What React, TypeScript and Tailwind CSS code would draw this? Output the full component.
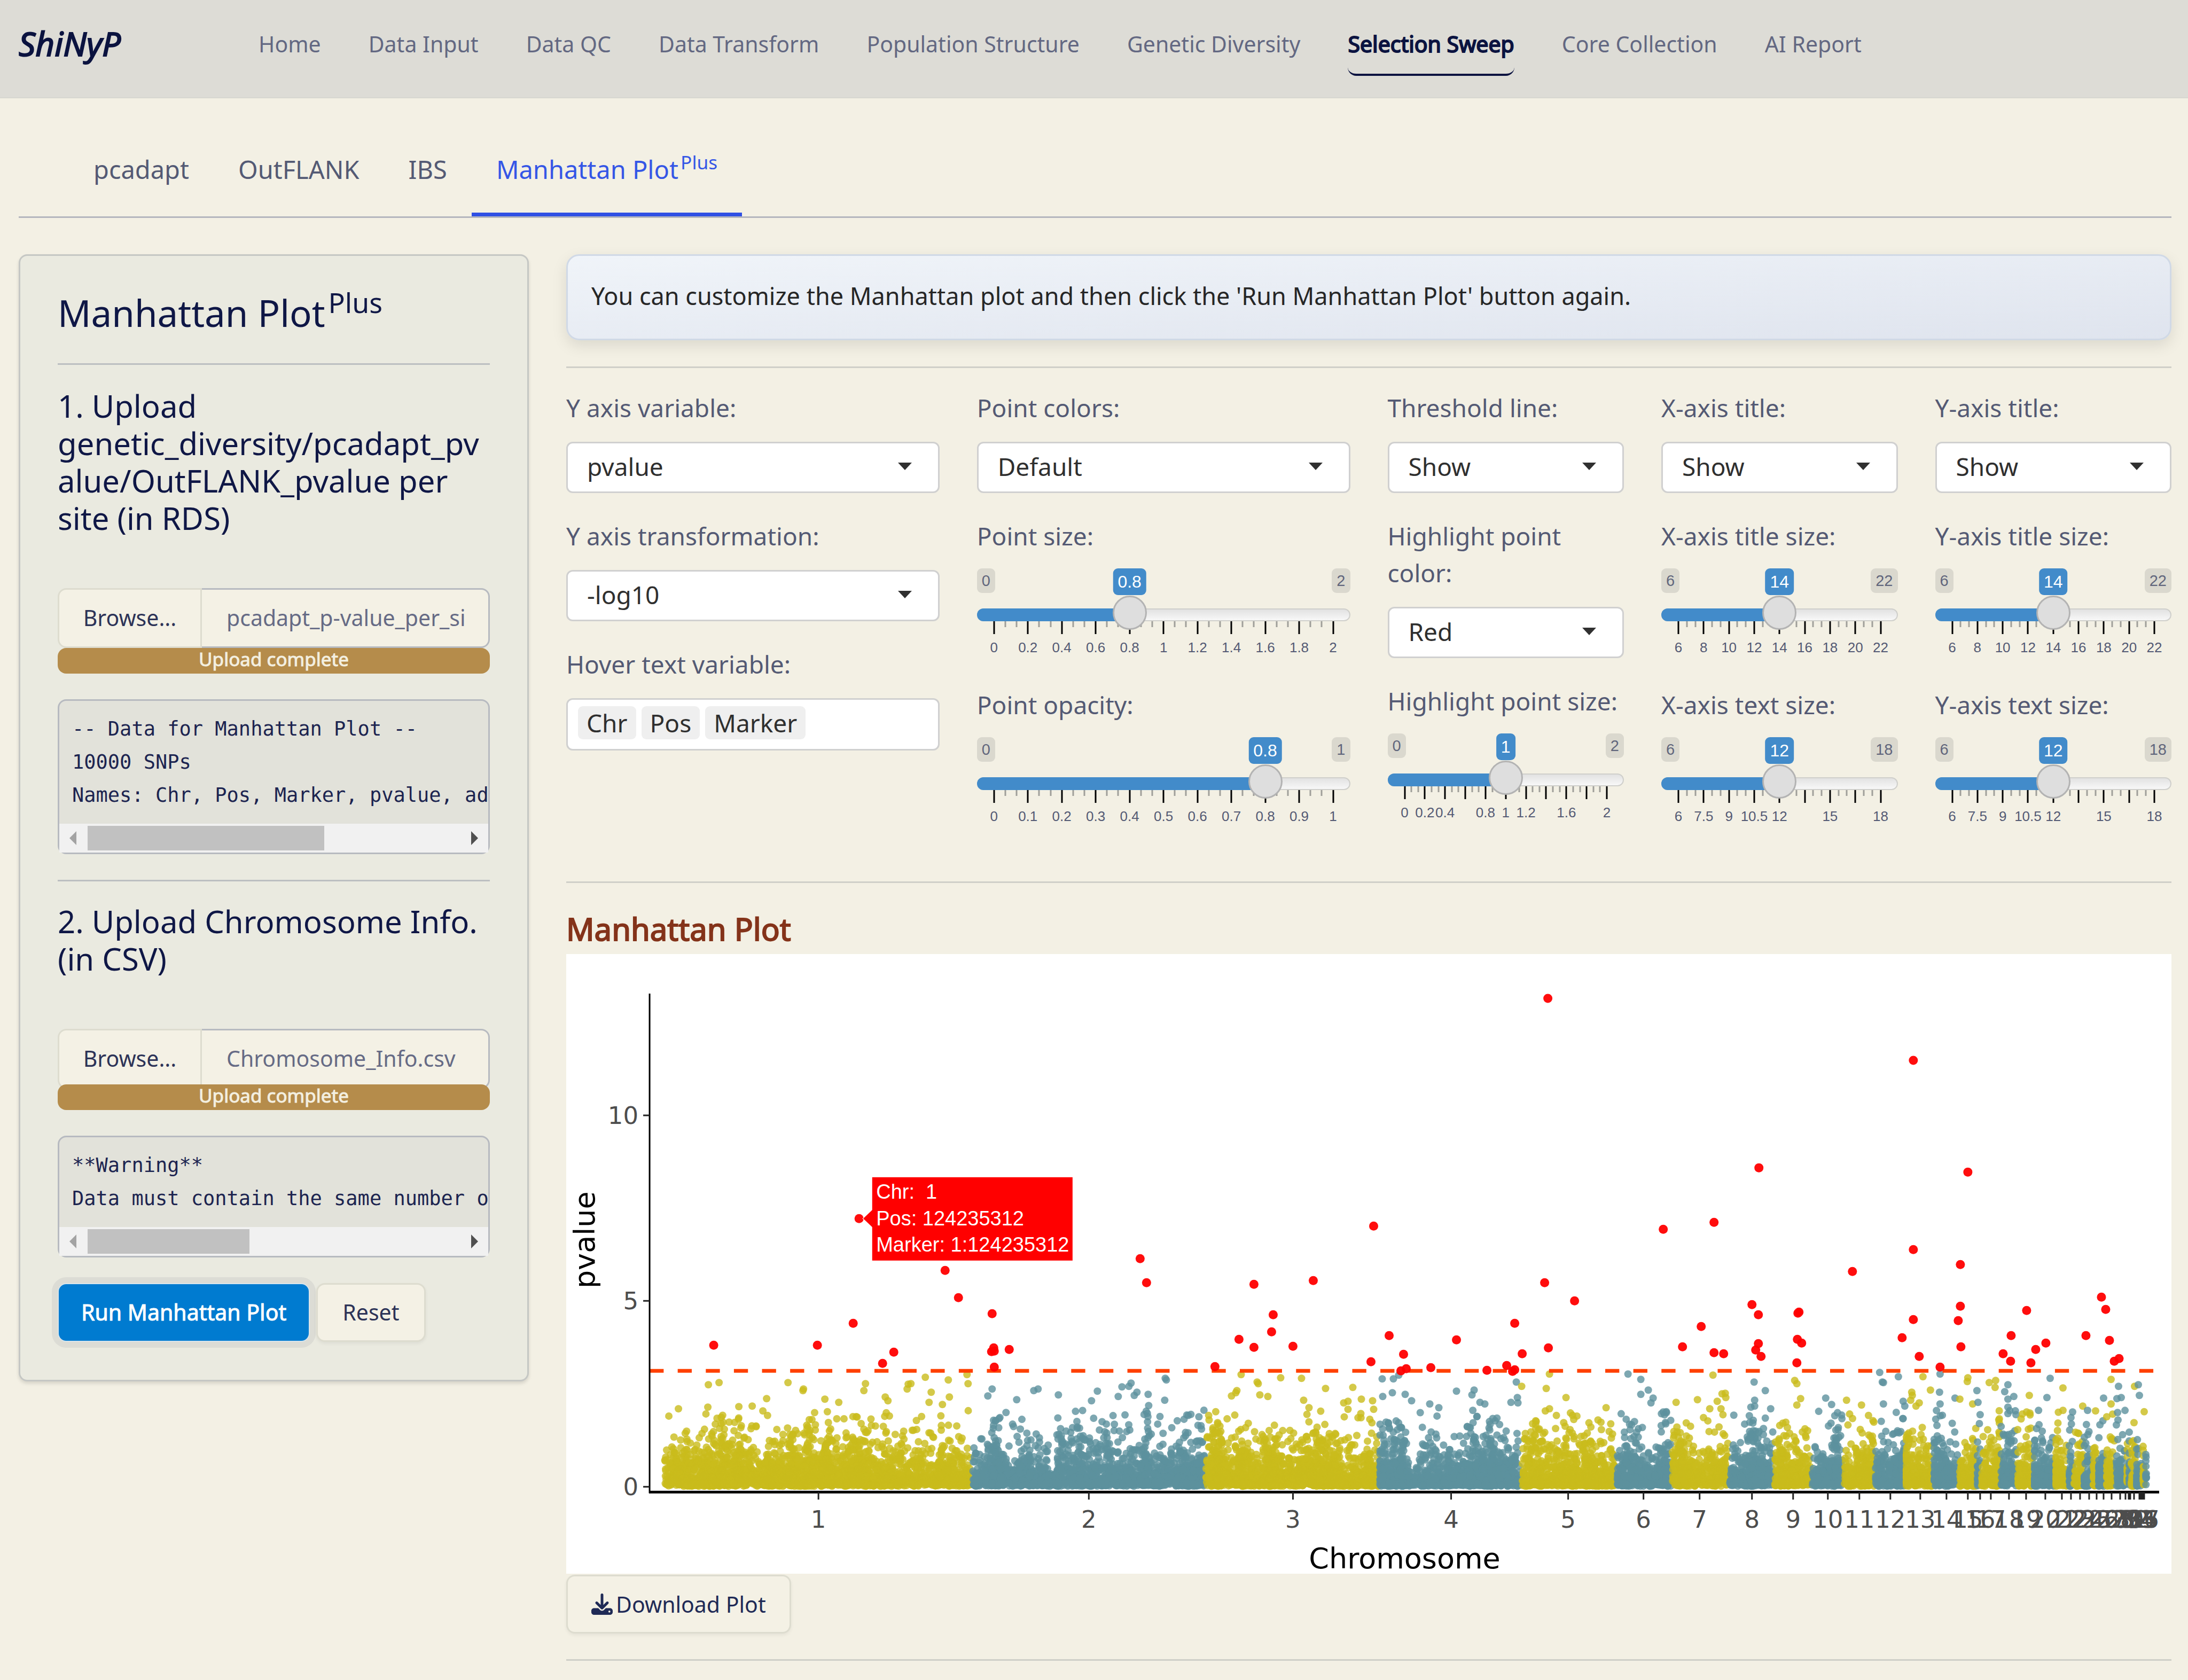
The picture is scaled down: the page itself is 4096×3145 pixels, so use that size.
import { useState } from "react";
import type { ReactNode } from "react";
import { FaDownload } from "react-icons/fa6";

const NAV_ITEMS = [
  "Home",
  "Data Input",
  "Data QC",
  "Data Transform",
  "Population Structure",
  "Genetic Diversity",
  "Selection Sweep",
  "Core Collection",
  "AI Report",
];

function Header() {
  return (
    <header className="flex min-h-[184px] items-start border-b-2 border-[#d7d7d0] bg-[#dddcd6] px-[35px]">
      <a
        href="#home"
        className="w-[200px] shrink-0 pt-9 text-[62px] leading-[90px] text-[#0b1340] italic [-webkit-text-stroke:2px_currentColor]"
      >
        ShiNyP
      </a>
      <nav className="ml-[249px] flex gap-[89px] pt-[51px]">
        {NAV_ITEMS.map((item) => (
          <a
            key={item}
            href={"#" + item.toLowerCase().replace(" ", "-")}
            className={
              item === "Selection Sweep"
                ? "rounded-b-[16px] border-b-4 border-[#0b1340] pb-[25px] text-[41px] leading-[62px] whitespace-nowrap text-[#0b1340] [-webkit-text-stroke:2px_currentColor]"
                : "border-b-4 border-transparent pb-[25px] text-[41px] leading-[62px] whitespace-nowrap text-[#636882]"
            }
          >
            {item}
          </a>
        ))}
      </nav>
    </header>
  );
}

function Tab({ active, children }: { active?: boolean; children: ReactNode }) {
  return (
    <button
      type="button"
      role="tab"
      aria-selected={active ? true : false}
      className={
        active
          ? "border-b-[7px] border-[#2f50e4] px-[46px] py-[46px] text-[47px] leading-[70px] whitespace-nowrap text-[#3556e6]"
          : "border-b-[7px] border-transparent px-[46px] py-[46px] text-[47px] leading-[70px] whitespace-nowrap text-[#545a74]"
      }
    >
      {children}
    </button>
  );
}

function FileUpload({ id, name, tight }: { id: string; name: string; tight?: boolean }) {
  return (
    <div className="mt-24">
      <div className="flex h-28">
        <button
          type="button"
          className="w-[270px] shrink-0 rounded-l-[16px] border-[3px] border-[#dddccf] bg-[#f4f1e5] text-[41px] text-[#2c3357]"
        >
          Browse...
        </button>
        <input
          id={id}
          aria-label="Selected file"
          readOnly
          value={name}
          className="min-w-0 flex-1 rounded-r-[16px] border-[3px] border-l-0 border-[#b7bac0] bg-[#f4f1e5] pr-9 pl-[46px] text-[41px] text-[#666b85]"
        />
      </div>
      <div
        className={
          tight
            ? "relative -mt-2 h-12 rounded-[16px] bg-[#b58c4b] text-center text-[35px] leading-[42px] text-[#f3efe0] [-webkit-text-stroke:1px_currentColor]"
            : "h-12 rounded-[16px] bg-[#b58c4b] text-center text-[35px] leading-[42px] text-[#f3efe0] [-webkit-text-stroke:1px_currentColor]"
        }
      >
        Upload complete
      </div>
    </div>
  );
}

function OutputBox({ text, thumb }: { text: string; thumb: string }) {
  return (
    <div className="mt-12 rounded-[16px] border-[3px] border-[#b7bac0] bg-[#e2e2da]">
      <pre className="overflow-hidden px-6 py-[22px] font-['DejaVu_Sans_Mono',monospace] text-[37px] leading-[62px] text-[#1c2450]">
        {text}
      </pre>
      <div className="flex h-[54px] items-center bg-[#f1f1f1] px-[19px]">
        <svg viewBox="0 0 13 26" className="h-[26px] w-[13px]" aria-hidden="true">
          <path d="M13 0 0 13l13 13z" fill="#a3a3a3" />
        </svg>
        <div className="mx-[21px] h-[46px] flex-1">
          <div className="h-full bg-[#c1c1c1]" style={{ width: thumb }} />
        </div>
        <svg viewBox="0 0 13 26" className="h-[26px] w-[13px]" aria-hidden="true">
          <path d="m0 0 13 13L0 26z" fill="#505050" />
        </svg>
      </div>
    </div>
  );
}

function Sidebar() {
  return (
    <aside className="self-start rounded-[16px] border-[3px] border-[#c5c7c4] bg-[#eaeae0] px-[70px] pt-16 pb-[71px] shadow-[0_4px_6px_rgba(0,0,0,0.12)]">
      <h2 className="text-[69px] leading-[84px] text-[#0f1746]">
        Manhattan Plot <sup className="-ml-3">Plus</sup>
      </h2>
      <hr className="mt-[53px] border-t-[3px] border-[#bcbfc1]" />
      <h3 className="mt-[42px] text-[58px] leading-[70px] wrap-anywhere text-[#0f1746]">
        1. Upload genetic_diversity/pcadapt_pvalue/OutFLANK_pvalue per site (in RDS)
      </h3>
      <FileUpload id="sites-file" name="pcadapt_p-value_per_si" />
      <OutputBox
        text={"-- Data for Manhattan Plot --\n10000 SNPs\nNames: Chr, Pos, Marker, pvalue, adj.pvalue"}
        thumb="63.5%"
      />
      <hr className="mt-12 border-t-[3px] border-[#bcbfc1]" />
      <h3 className="mt-10 text-[58px] leading-[70px] text-[#0f1746]">2. Upload Chromosome Info. (in CSV)</h3>
      <FileUpload id="chromosome-file" name="Chromosome_Info.csv" tight />
      <OutputBox
        text={"**Warning**\nData must contain the same number of chromosomes"}
        thumb="43.5%"
      />
      <div className="mt-12 flex gap-3">
        <button
          type="button"
          className="h-[110px] rounded-[16px] border-2 border-[#d9e4ea] bg-[#007bd0] px-[42px] text-[41px] whitespace-nowrap text-white shadow-[0_0_0_11px_#dcdcd5] [-webkit-text-stroke:1px_currentColor]"
        >
          Run Manhattan Plot
        </button>
        <button
          type="button"
          className="h-[110px] rounded-[16px] border-[3px] border-[#dddccf] bg-[#f4f1e5] px-[46px] text-[41px] text-[#2c3357] shadow-[0_3px_6px_rgba(0,0,0,0.06)]"
        >
          Reset
        </button>
      </div>
    </aside>
  );
}

function SelectField({ id, label, options }: { id: string; label: string; options: string[] }) {
  return (
    <div className="mb-[46px]">
      <label htmlFor={id} className="block text-[46px] leading-[69px] text-[#545a74]">
        {label}
      </label>
      <div className="relative mt-[29px]">
        <select
          id={id}
          className="h-24 w-full appearance-none rounded-[12px] border-[3px] border-[#d0d0d0] bg-white px-9 pb-1 text-[46px] text-[#2f2f2f]"
        >
          {options.map((option) => (
            <option key={option}>{option}</option>
          ))}
        </select>
        <svg
          viewBox="0 0 26 14"
          className="pointer-events-none absolute top-[39px] right-[52px] h-[14px] w-[26px]"
          aria-hidden="true"
        >
          <path d="M0 0h26L13 14z" fill="#303030" />
        </svg>
      </div>
    </div>
  );
}

function TagField({ label, tags }: { label: string; tags: string[] }) {
  return (
    <div>
      <label htmlFor="hover-text" className="block text-[46px] leading-[69px] text-[#545a74]">
        {label}
      </label>
      <div className="mt-[29px] flex h-[98px] items-start gap-[10px] rounded-[12px] border-[3px] border-[#d0d0d0] bg-white px-[19px] pt-3">
        {tags.map((tag) => (
          <span key={tag} className="rounded-[9px] bg-[#efefef] px-4 text-[46px] leading-[62px] text-[#2f2f2f]">
            {tag}
          </span>
        ))}
        <input id="hover-text" className="h-[62px] min-w-0 flex-1 outline-none" />
      </div>
    </div>
  );
}

type SliderProps = {
  id: string;
  label: string;
  min: number;
  max: number;
  step: number;
  initial: number;
  ticks: string[];
};

function SliderField({ id, label, min, max, step, initial, ticks }: SliderProps) {
  const [value, setValue] = useState(initial);
  const share = ((value - min) / (max - min)) * 100;
  const intervals = ticks.length - 1;
  const marks = Array.from({ length: intervals * 3 + 1 }, (_, i) => i);
  return (
    <div className="mb-[46px]">
      <label htmlFor={id} className="block text-[46px] leading-[69px] text-[#545a74]">
        {label}
      </label>
      <div className="relative mt-[26px] h-[175px] font-['Liberation_Sans',sans-serif]">
        <div className="flex h-[75px] items-start justify-between">
          <span className="rounded-[9px] bg-[#dad8ce] px-[9px] text-[29px] leading-[46px] text-[#61667c]">{min}</span>
          <span className="rounded-[9px] bg-[#dad8ce] px-[9px] text-[29px] leading-[46px] text-[#61667c]">{max}</span>
        </div>
        <div className="flex h-6 overflow-hidden rounded-[12px] border-2 border-[#cfcfcb] bg-linear-to-b from-[#e2e2e2] to-[#f8f8f8]" />
        <div className="absolute top-[75px] right-8 left-8 h-0">
          <div className="-ml-8 h-6 rounded-l-[12px] bg-[#428bca]" style={{ width: "calc(" + share + "% + 32px)" }} />
          {marks.map((i) => (
            <span
              key={i}
              className={
                i % 3 === 0
                  ? "absolute top-6 h-6 w-[3px] -translate-x-1/2 bg-black"
                  : "absolute top-6 h-[11px] w-[3px] -translate-x-1/2 bg-[#a09f9a]"
              }
              style={{ left: (i / (intervals * 3)) * 100 + "%" }}
            />
          ))}
          {ticks.map((tick, i) => (
            <span
              key={i}
              className="absolute top-[57px] -translate-x-1/2 text-[26px] leading-[32px] text-[#545a74]"
              style={{ left: (i / intervals) * 100 + "%" }}
            >
              {tick}
            </span>
          ))}
          <span
            className="absolute top-[-24px] size-16 -translate-x-1/2 rounded-full border-[3px] border-[#b3b3b3] bg-[#dedede]"
            style={{ left: share + "%" }}
          />
          <span
            className="absolute top-[-75px] -translate-x-1/2 rounded-[9px] bg-[#428bca] px-[9px] text-[32px] leading-[50px] text-white"
            style={{ left: share + "%" }}
          >
            {value}
          </span>
        </div>
        <input
          id={id}
          type="range"
          min={min}
          max={max}
          step={step}
          value={value}
          onChange={(event) => setValue(Number(event.target.value))}
          className="absolute top-[50px] left-0 h-16 w-full cursor-pointer opacity-0"
        />
      </div>
    </div>
  );
}

const SIZE_TICKS = ["6", "8", "10", "12", "14", "16", "18", "20", "22"];
const TEXT_TICKS = ["6", "7.5", "9", "10.5", "12", "", "15", "", "18"];

function Controls() {
  return (
    <section className="mt-10 grid grid-cols-12 gap-x-[70px]">
      <div className="col-span-3">
        <SelectField id="y-variable" label="Y axis variable:" options={["pvalue"]} />
        <SelectField id="y-transform" label="Y axis transformation:" options={["-log10"]} />
        <TagField label="Hover text variable:" tags={["Chr", "Pos", "Marker"]} />
      </div>
      <div className="col-span-3">
        <SelectField id="point-colors" label="Point colors:" options={["Default"]} />
        <SliderField
          id="point-size"
          label="Point size:"
          min={0}
          max={2}
          step={0.1}
          initial={0.8}
          ticks={["0", "0.2", "0.4", "0.6", "0.8", "1", "1.2", "1.4", "1.6", "1.8", "2"]}
        />
        <SliderField
          id="point-opacity"
          label="Point opacity:"
          min={0}
          max={1}
          step={0.1}
          initial={0.8}
          ticks={["0", "0.1", "0.2", "0.3", "0.4", "0.5", "0.6", "0.7", "0.8", "0.9", "1"]}
        />
      </div>
      <div className="col-span-2">
        <SelectField id="threshold" label="Threshold line:" options={["Show", "Hide"]} />
        <SelectField id="highlight-color" label="Highlight point color:" options={["Red"]} />
        <SliderField
          id="highlight-size"
          label="Highlight point size:"
          min={0}
          max={2}
          step={0.1}
          initial={1}
          ticks={["0", "0.2", "0.4", "", "0.8", "1", "1.2", "", "1.6", "", "2"]}
        />
      </div>
      <div className="col-span-2">
        <SelectField id="x-title" label="X-axis title:" options={["Show", "Hide"]} />
        <SliderField id="x-title-size" label="X-axis title size:" min={6} max={22} step={1} initial={14} ticks={SIZE_TICKS} />
        <SliderField id="x-text-size" label="X-axis text size:" min={6} max={18} step={1} initial={12} ticks={TEXT_TICKS} />
      </div>
      <div className="col-span-2">
        <SelectField id="y-title" label="Y-axis title:" options={["Show", "Hide"]} />
        <SliderField id="y-title-size" label="Y-axis title size:" min={6} max={22} step={1} initial={14} ticks={SIZE_TICKS} />
        <SliderField id="y-text-size" label="Y-axis text size:" min={6} max={18} step={1} initial={12} ticks={TEXT_TICKS} />
      </div>
    </section>
  );
}

type Point = [number, number];

// Right edge of each chromosome's band on the x axis; the first band starts at BAND_START.
const BAND_START = 181;
const BAND_ENDS = [
  757, 1194, 1520, 1786, 1963, 2067, 2174, 2259, 2329, 2389, 2447, 2505, 2557, 2604, 2638, 2646, 2682, 2713, 2745, 2785,
  2810, 2819, 2838, 2855, 2865, 2880, 2898, 2918, 2922, 2926, 2936, 2948, 2953, 2956,
];

const TICK_X = [
  472, 978, 1360, 1656, 1875, 2016, 2121, 2219, 2296, 2361, 2420, 2478, 2534, 2583, 2623, 2646, 2666, 2700, 2732, 2768,
  2799, 2816, 2833, 2850, 2864, 2877, 2892, 2908, 2918, 2924, 2927, 2934, 2944, 2947, 2950, 2952, 2953,
];

const SIGNIFICANT: Point[] = [
  [276, 732], [470, 732], [537, 691], [548, 495], [592, 766], [613, 745], [709, 592], [734, 643], [797, 673], [800, 737],
  [796, 744], [801, 743], [801, 773], [829, 740], [1074, 570], [1086, 615], [1214, 772], [1259, 721], [1287, 618],
  [1287, 736], [1320, 707], [1323, 675], [1360, 734], [1398, 611], [1506, 763], [1511, 509], [1540, 714], [1567, 749],
  [1562, 780], [1572, 776], [1618, 774], [1666, 722], [1723, 779], [1760, 770], [1771, 781], [1775, 778], [1775, 691],
  [1789, 748], [1831, 615], [1837, 83], [1838, 737], [1887, 649], [2053, 515], [2089, 735], [2124, 697], [2148, 502],
  [2148, 746], [2166, 748], [2219, 656], [2231, 675], [2232, 400], [2231, 729], [2226, 741], [2236, 753], [2305, 672],
  [2307, 670], [2304, 721], [2312, 728], [2303, 765], [2407, 594], [2500, 718], [2521, 199], [2521, 553], [2521, 684],
  [2532, 753], [2571, 773], [2623, 408], [2609, 581], [2609, 659], [2605, 686], [2610, 735], [2689, 748], [2704, 714],
  [2703, 762], [2733, 667], [2741, 765], [2750, 740], [2769, 728], [2844, 714], [2873, 642], [2881, 665], [2888, 723],
  [2897, 762], [2906, 757],
];

const UPPER_POINTS: Point[] = [
  [266, 806], [286, 802], [415, 802], [444, 814], [443, 817], [375, 832], [484, 833], [510, 839], [210, 851], [265, 848], [323, 847],
  [348, 846], [560, 804], [557, 817], [640, 805], [645, 804], [638, 814], [672, 792], [683, 820], [715, 797], [717, 829], [750, 787],
  [752, 804], [597, 829], [602, 836], [679, 839], [704, 843], [797, 814], [789, 827], [823, 858], [843, 834], [875, 817], [883, 814],
  [921, 825], [994, 818], [983, 836], [1040, 810], [1057, 803], [1053, 809], [1068, 820], [1063, 826], [1089, 824], [1121, 794], [1123, 797],
  [1120, 835], [1033, 828], [1090, 845], [1184, 866], [1263, 787], [1293, 801], [1295, 804], [1337, 793], [1376, 794], [1245, 827],
  [1255, 817], [1253, 821], [1298, 825], [1313, 828], [1421, 813], [1380, 835], [1390, 849], [1472, 811], [1455, 840], [1463, 852],
  [1463, 837], [1488, 833], [1509, 836], [1511, 852], [1527, 795], [1548, 795], [1558, 788], [1546, 821], [1570, 824], [1582, 836], [1528, 828],
  [1666, 818], [1699, 816], [1695, 825], [1616, 842], [1633, 849], [1710, 839], [1719, 842], [1778, 801], [1780, 830], [1768, 839], [1781, 840], [1788, 809],
  [1840, 786], [1834, 813], [1871, 830], [1946, 849], [1840, 851], [1987, 786], [2011, 796], [2025, 816], [2011, 824],
  [2034, 831], [2030, 840], [2053, 857], [2077, 839], [2117, 834], [2146, 788], [2169, 822], [2163, 823], [2170, 830], [2154, 837], [2140, 851],
  [2161, 851], [2223, 801], [2244, 817], [2224, 835], [2217, 848], [2224, 846], [2254, 851], [2185, 863], [2299, 798], [2303, 804], [2310, 832],
  [2303, 844], [2357, 831], [2368, 843], [2374, 864], [2396, 835], [2424, 844], [2458, 783], [2463, 801], [2465, 802],
  [2493, 791], [2465, 842], [2502, 837], [2505, 846], [2539, 791], [2518, 820], [2519, 826], [2516, 835], [2532, 840], [2526, 846], [2553, 816],
  [2571, 786], [2570, 820], [2571, 842], [2599, 831], [2623, 793], [2622, 800], [2608, 833], [2640, 817], [2632, 842],
  [2642, 839], [2646, 862], [2663, 802], [2675, 798], [2674, 811], [2698, 806], [2692, 819], [2709, 828], [2698, 833],
  [2698, 848], [2698, 860], [2738, 826], [2733, 857], [2739, 859], [2777, 794], [2771, 830], [2801, 812], [2801, 854],
  [2819, 857], [2838, 846], [2847, 854], [2862, 855], [2877, 831], [2891, 796], [2891, 842], [2894, 861], [2905, 809],
  [2910, 830], [2902, 832], [2904, 872], [2935, 809], [2934, 877], [2942, 806], [2944, 826],
];

function makeRandom(seed: number) {
  let state = seed;
  return () => {
    state = (state * 1664525 + 1013904223) % 4294967296;
    return state / 4294967296;
  };
}

function bandOf(x: number) {
  const index = BAND_ENDS.findIndex((end) => x <= end);
  return index < 0 ? BAND_ENDS.length - 1 : index;
}

function makeBackground(): Point[][] {
  const random = makeRandom(20240611);
  const bands: Point[][] = BAND_ENDS.map(() => []);
  let start = BAND_START;
  BAND_ENDS.forEach((end, band) => {
    const width = end - start;
    const count = Math.round(width * 4.1);
    const peaks = Array.from({ length: Math.max(1, Math.round(width / 45)) }, () => start + random() * width);
    for (let i = 0; i < count; i += 1) {
      const nearPeak = random() < 0.22;
      let x = start + 3 + random() * Math.max(width - 3, 1);
      if (nearPeak) {
        const peak = peaks[Math.floor(random() * peaks.length)];
        x = Math.min(end, Math.max(start + 3, peak + (random() + random() - 1) * 16));
      }
      const mean = nearPeak ? 0.64 : random() < 0.1 ? 0.72 : 0.38;
      const value = -Math.log(1 - random()) * mean;
      const inGap = (x > 902 && x < 918) || (x > 1576 && x < 1590);
      if (value < 2.05 && !(inGap && value > 0.25 + random() * 0.2)) {
        bands[band].push([x, 996 - value * 69.5]);
      }
    }
    start = end;
  });
  UPPER_POINTS.forEach((point) => bands[bandOf(point[0])].push(point));
  return bands;
}

const BACKGROUND = makeBackground();

function ManhattanChart() {
  return (
    <svg
      viewBox="0 0 3004 1160"
      className="mt-3 block w-full bg-white font-['DejaVu_Sans',Verdana,sans-serif]"
      role="img"
      aria-label="Manhattan plot of pvalue by chromosome"
    >
      {BACKGROUND.map((points, band) => (
        <g key={band} fill={band % 2 === 0 ? "#c9bb1b" : "#5c919e"} fillOpacity={0.8}>
          {points.map((point, i) => (
            <circle key={i} cx={point[0].toFixed(1)} cy={point[1].toFixed(1)} r={7} />
          ))}
        </g>
      ))}
      <path d="M156 780H2972" stroke="#ff4000" strokeWidth={7} strokeDasharray="26.3 26.3" />
      <g fill="#ff0000" fillOpacity={0.95}>
        {SIGNIFICANT.map((point, i) => (
          <circle key={i} cx={point[0]} cy={point[1]} r={8.5} />
        ))}
      </g>

      <path d="M156 74V1009" stroke="#000" strokeWidth={3} />
      <path d="M155 1007H2981" stroke="#000" strokeWidth={5} />
      <path d="M144 302h12M144 649h12M144 997h12" stroke="#222" strokeWidth={3} />
      <g fill="#4d4d4d" fontSize={45} textAnchor="end">
        <text x={135} y={318}>10</text>
        <text x={135} y={665}>5</text>
        <text x={135} y={1013}>0</text>
      </g>
      <g fill="#4d4d4d" fontSize={45} textAnchor="middle">
        {TICK_X.map((x, i) => (
          <text key={i} x={x} y={1074}>
            {i + 1}
          </text>
        ))}
      </g>
      <path d={TICK_X.map((x) => "M" + x + " 1007v14").join("")} stroke="#222" strokeWidth={3} />
      <text x={1569} y={1150} fontSize={54} textAnchor="middle" fill="#000">
        Chromosome
      </text>
      <text transform="translate(53 535) rotate(-90)" fontSize={54} textAnchor="middle" fill="#000">
        pvalue
      </text>

      <path d="M555 495l17-16V417H948V574H572V511z" fill="#ff0000" stroke="#fff" strokeWidth={1} />
      <g fill="#fff" fontSize={38} className="font-['Liberation_Sans',sans-serif]">
        <text x={580} y={458}>{"Chr:\u00a0 1"}</text>
        <text x={580} y={508}>Pos: 124235312</text>
        <text x={580} y={557}>Marker: 1:124235312</text>
      </g>
    </svg>
  );
}

export default function App() {
  return (
    <div className="min-h-screen bg-[#f3f0e4] pb-[34px] font-['Noto_Sans',sans-serif]">
      <Header />
      <div className="pr-[31px] pl-[35px]">
        <div role="tablist" className="mt-[52px] flex border-b-[3px] border-[#b4b6be] pl-[94px]">
          <Tab>pcadapt</Tab>
          <Tab>OutFLANK</Tab>
          <Tab>IBS</Tab>
          <Tab active>
            Manhattan Plot <sup className="-ml-2">Plus</sup>
          </Tab>
        </div>
        <main className="mt-[68px] grid grid-cols-4 gap-x-[70px]">
          <Sidebar />
          <div className="col-span-3">
            <p className="rounded-[24px] border-[3px] border-[#d0d9e6] bg-linear-to-br from-[#f0f4f9] to-[#dfe4ee] px-11 pt-10 pb-[46px] text-[45px] leading-[69px] text-[#262626] shadow-[0_10px_28px_rgba(0,0,0,0.1)]">
              You can customize the Manhattan plot and then click the 'Run Manhattan Plot' button again.
            </p>
            <hr className="mt-[49px] border-t-[3px] border-[#cfcfc8]" />
            <Controls />
            <hr className="mt-[49px] border-t-[3px] border-[#cfcfc8]" />
            <h2 className="mt-[51px] text-[58px] leading-[70px] text-[#84331a] [-webkit-text-stroke:2px_currentColor]">
              Manhattan Plot
            </h2>
            <ManhattanChart />
            <button
              type="button"
              className="mt-0.5 flex h-[110px] items-center gap-1.5 rounded-[16px] border-[3px] border-[#dddccf] bg-[#f4f1e5] px-[44px] text-[41px] text-[#1f2a56] shadow-[0_3px_6px_rgba(0,0,0,0.06)]"
            >
              <FaDownload size={40} aria-hidden="true" />
              Download Plot
            </button>
            <hr className="mt-12 border-t-[3px] border-[#cfcfc8]" />
          </div>
        </main>
      </div>
    </div>
  );
}
